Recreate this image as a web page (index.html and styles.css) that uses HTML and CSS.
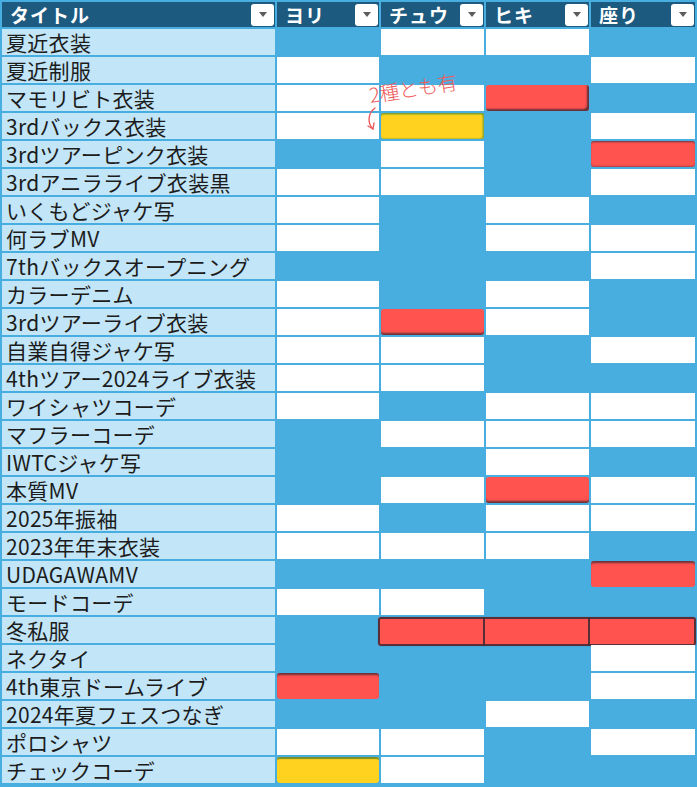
FILE: index.html
```html
<!DOCTYPE html>
<html lang="ja">
<head>
<meta charset="utf-8">
<title>衣装表</title>
<link rel="stylesheet" href="styles.css">
</head>
<body>
<div class="sheet">
  <div class="hd"><span>タイトル</span><span class="dd"></span></div>
  <div class="hd"><span>ヨリ</span><span class="dd"></span></div>
  <div class="hd"><span>チュウ</span><span class="dd"></span></div>
  <div class="hd"><span>ヒキ</span><span class="dd"></span></div>
  <div class="hd"><span>座り</span><span class="dd"></span></div>

  <div class="t">夏近衣装</div><div class="b"></div><div class="w"></div><div class="w"></div><div class="b"></div>
  <div class="t">夏近制服</div><div class="w"></div><div class="b"></div><div class="b"></div><div class="w"></div>
  <div class="t">マモリビト衣装</div><div class="w"></div><div class="w"></div><div class="r edge-rb"></div><div class="b"></div>
  <div class="t">3rdバックス衣装</div><div class="w"></div><div class="y edge-tr"></div><div class="b"></div><div class="w"></div>
  <div class="t">3rdツアーピンク衣装</div><div class="b"></div><div class="w"></div><div class="b"></div><div class="r edge-tb"></div>
  <div class="t">3rdアニラライブ衣装黒</div><div class="w"></div><div class="w"></div><div class="b"></div><div class="w"></div>
  <div class="t">いくもどジャケ写</div><div class="w"></div><div class="b"></div><div class="w"></div><div class="b"></div>
  <div class="t">何ラブMV</div><div class="w"></div><div class="b"></div><div class="w"></div><div class="w"></div>
  <div class="t">7thバックスオープニング</div><div class="b"></div><div class="b"></div><div class="b"></div><div class="w"></div>
  <div class="t">カラーデニム</div><div class="w"></div><div class="b"></div><div class="w"></div><div class="b"></div>
  <div class="t">3rdツアーライブ衣装</div><div class="w"></div><div class="r edge-b"></div><div class="w"></div><div class="b"></div>
  <div class="t">自業自得ジャケ写</div><div class="w"></div><div class="w"></div><div class="b"></div><div class="w"></div>
  <div class="t">4thツアー2024ライブ衣装</div><div class="w"></div><div class="w"></div><div class="b"></div><div class="b"></div>
  <div class="t">ワイシャツコーデ</div><div class="w"></div><div class="b"></div><div class="w"></div><div class="w"></div>
  <div class="t">マフラーコーデ</div><div class="b"></div><div class="w"></div><div class="w"></div><div class="w"></div>
  <div class="t">IWTCジャケ写</div><div class="b"></div><div class="b"></div><div class="w"></div><div class="b"></div>
  <div class="t">本質MV</div><div class="b"></div><div class="w"></div><div class="r edge-b"></div><div class="w"></div>
  <div class="t">2025年振袖</div><div class="w"></div><div class="b"></div><div class="w"></div><div class="w"></div>
  <div class="t">2023年年末衣装</div><div class="w"></div><div class="w"></div><div class="w"></div><div class="b"></div>
  <div class="t">UDAGAWAMV</div><div class="b"></div><div class="b"></div><div class="b"></div><div class="r edge-t"></div>
  <div class="t">モードコーデ</div><div class="w"></div><div class="w"></div><div class="b"></div><div class="b"></div>
  <div class="t">冬私服</div><div class="b"></div><div class="r span3"></div>
  <div class="t">ネクタイ</div><div class="b"></div><div class="b"></div><div class="b"></div><div class="w"></div>
  <div class="t">4th東京ドームライブ</div><div class="r edge-t"></div><div class="b"></div><div class="b"></div><div class="w"></div>
  <div class="t">2024年夏フェスつなぎ</div><div class="b"></div><div class="b"></div><div class="w"></div><div class="b"></div>
  <div class="t">ポロシャツ</div><div class="w"></div><div class="w"></div><div class="b"></div><div class="w"></div>
  <div class="t">チェックコーデ</div><div class="y edge-t"></div><div class="w"></div><div class="b"></div><div class="b"></div>

  <div class="note">2種とも有</div>
  <svg class="note-arrow" width="20" height="30" viewBox="0 0 20 30">
    <path d="M11 3 C4 8, 3 18, 9 24" fill="none" stroke="#EE5B5B" stroke-width="1.4" stroke-linecap="round"/>
    <path d="M4 21 L9 24 L10 18" fill="none" stroke="#EE5B5B" stroke-width="1.4" stroke-linecap="round" stroke-linejoin="round"/>
  </svg>
</div>
</body>
</html>
```

FILE: styles.css
```css
html, body {
  margin: 0;
  padding: 0;
  background: #48AEE0;
}

body {
  font-family: "Noto Sans CJK JP", "Noto Sans", sans-serif;
  width: 697px;
  height: 787px;
  overflow: hidden;
}

.sheet {
  position: relative;
  display: grid;
  grid-template-columns: 273px 102px 103px 103px 104px;
  grid-template-rows: 25px;
  grid-auto-rows: 26px;
  gap: 2px;
  padding: 2px 2px 4px 2px;
  background: #48AEE0;
}

.hd {
  background: #1C5A80;
  color: #ffffff;
  font-weight: 700;
  font-size: 19px;
  letter-spacing: 1px;
  line-height: 25px;
  display: flex;
  align-items: center;
  justify-content: space-between;
  padding: 0 1px 0 8px;
}

.dd {
  width: 23px;
  height: 22px;
  background: #ffffff;
  border-radius: 3px;
  display: flex;
  align-items: center;
  justify-content: center;
}

.dd::after {
  content: "";
  width: 0;
  height: 0;
  border-left: 4px solid transparent;
  border-right: 4px solid transparent;
  border-top: 5px solid #5c5c5c;
}

.t {
  background: #C2E5F7;
  color: #1c1c1c;
  font-size: 21px;
  line-height: 26px;
  letter-spacing: 0.3px;
  padding-left: 4px;
  white-space: nowrap;
}

.w {
  background: #ffffff;
}

.b {
  background: transparent;
}

.r {
  background: #FF5350;
  border-radius: 3px;
}

.y {
  background: #FFD21F;
  border-radius: 3px;
}

.edge-rb {
  box-shadow: inset -3px -3px 2px -1px rgba(70, 42, 52, 0.85);
}

.edge-tb {
  box-shadow: inset 0 2px 2px -1px rgba(70, 42, 52, 0.8), inset 0 -2px 2px -1px rgba(70, 42, 52, 0.45);
}

.edge-b {
  box-shadow: inset 0 -3px 2px -1px rgba(70, 42, 52, 0.8);
}

.edge-t {
  box-shadow: inset 0 3px 2px -1px rgba(70, 42, 52, 0.8);
}

.y.edge-tr {
  box-shadow: inset 0 2px 1px -0.5px rgba(105, 150, 45, 0.85), inset -2px -1px 1px -0.5px rgba(105, 150, 45, 0.7);
}

.y.edge-t {
  box-shadow: inset 0 3px 1px -1px rgba(100, 130, 40, 0.85);
}

.span3 {
  grid-column: span 3;
  margin: 0 -1px -3px -3px;
  border-radius: 3px;
  background:
    linear-gradient(to right,
      transparent 105px, rgba(70, 42, 52, 0.9) 105px, rgba(70, 42, 52, 0.9) 107px, transparent 107px,
      transparent 210px, rgba(70, 42, 52, 0.9) 210px, rgba(70, 42, 52, 0.9) 212px, transparent 212px),
    #FF5350;
  box-shadow: inset 0 0 0 2px rgba(70, 42, 52, 0.9), 0 0 1px rgba(70, 42, 52, 0.6);
}

.note {
  position: absolute;
  left: 371px;
  top: 84px;
  color: #EE5B5B;
  font-size: 20px;
  font-weight: 300;
  line-height: 22px;
  letter-spacing: -0.5px;
  transform: rotate(-9deg);
  transform-origin: left bottom;
  white-space: nowrap;
}

.note-arrow {
  position: absolute;
  left: 364px;
  top: 105px;
}
```
